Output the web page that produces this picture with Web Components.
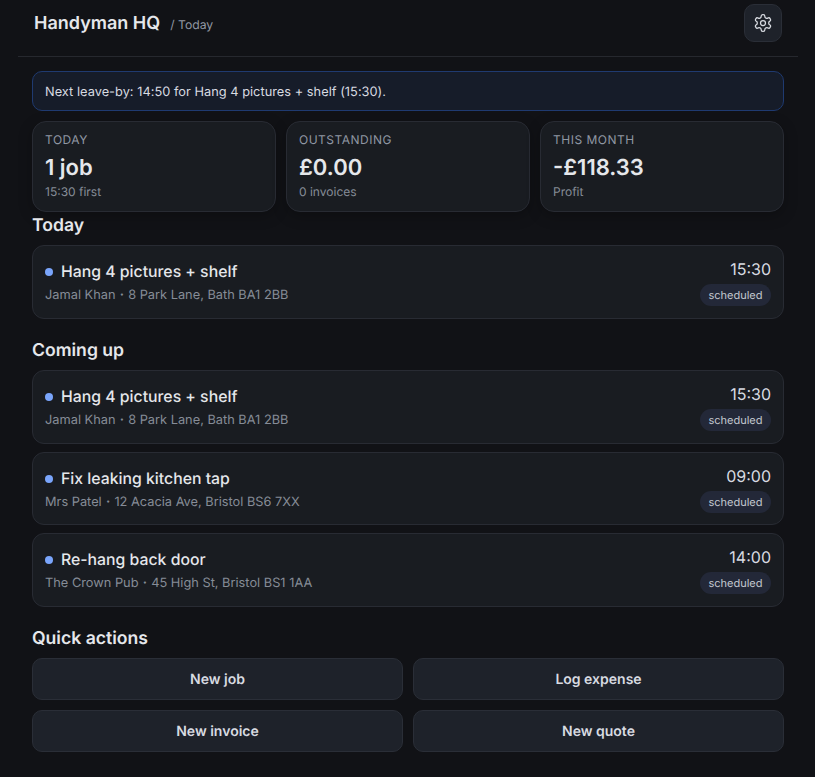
<!doctype html>
<html lang="en">
<head>
<meta charset="utf-8">
<title>Handyman HQ</title>
<style>
  html, body { margin: 0; background: #111216; }
  body { font-family: Inter, "Liberation Sans", sans-serif; color: #e5e7eb; text-rendering: geometricPrecision; }
</style>
</head>
<body>
<app-shell>
  <top-bar slot="header" title-text="Handyman HQ" crumb="/ Today"></top-bar>
  <info-banner>Next leave-by: 14:50 for Hang 4 pictures + shelf (15:30).</info-banner>
  <div class="stats" style="display:grid;grid-template-columns:repeat(3,1fr);gap:10px;">
    <stat-card label="TODAY" value="1 job" note="15:30 first"></stat-card>
    <stat-card label="OUTSTANDING" value="£0.00" note="0 invoices"></stat-card>
    <stat-card label="THIS MONTH" value="-£118.33" note="Profit"></stat-card>
  </div>
  <section-title>Today</section-title>
  <job-card name="Hang 4 pictures + shelf" who="Jamal Khan" where="8 Park Lane, Bath BA1 2BB" time="15:30"></job-card>
  <section-title style="margin-top:18.5px">Coming up</section-title>
  <job-card name="Hang 4 pictures + shelf" who="Jamal Khan" where="8 Park Lane, Bath BA1 2BB" time="15:30"></job-card>
  <job-card style="margin-top:8px" name="Fix leaking kitchen tap" who="Mrs Patel" where="12 Acacia Ave, Bristol BS6 7XX" time="09:00"></job-card>
  <job-card style="margin-top:8px" name="Re-hang back door" who="The Crown Pub" where="45 High St, Bristol BS1 1AA" time="14:00"></job-card>
  <section-title style="margin-top:18.5px">Quick actions</section-title>
  <div style="display:grid;grid-template-columns:1fr 1fr;gap:10px;">
    <action-button>New job</action-button>
    <action-button>Log expense</action-button>
    <action-button>New invoice</action-button>
    <action-button>New quote</action-button>
  </div>
</app-shell>

<script>
class AppShell extends HTMLElement {
  constructor() {
    super();
    this.attachShadow({mode: 'open'}).innerHTML = `
      <style>
        :host { display: block; width: 780px; margin-left: 18px; box-sizing: border-box; }
        main { padding: 14px 14px 25px; display: flex; flex-direction: column; }
        ::slotted(info-banner) { margin-bottom: 10px; }
      </style>
      <slot name="header"></slot>
      <main><slot></slot></main>
    `;
  }
}

class TopBar extends HTMLElement {
  constructor() {
    super();
    const title = this.getAttribute('title-text') || '';
    const crumb = this.getAttribute('crumb') || '';
    this.attachShadow({mode: 'open'}).innerHTML = `
      <style>
        :host { display: flex; align-items: center; justify-content: space-between;
                height: 56px; padding: 0 16px 0 16px; border-bottom: 1px solid #26282e;
                box-sizing: content-box; }
        .left { display: flex; align-items: baseline; gap: 10px; margin-top: -9px; }
        h1 { margin: 0; font-size: 18px; font-weight: 600; color: #e5e7eb; line-height: 28px; }
        span { font-size: 12.2px; color: #9097a3; }
        button { width: 38px; height: 38px; margin-top: -10px; padding: 0; display: grid; place-items: center;
                 background: #1e222a; border: 1px solid #2a2e37; border-radius: 10px; color: #d8dbe1; }
        svg { width: 20px; height: 20px; fill: none; stroke: currentColor; stroke-width: 1.5;
              stroke-linecap: round; stroke-linejoin: round; }
      </style>
      <div class="left"><h1>${title}</h1><span>${crumb}</span></div>
      <button aria-label="Settings">
        <svg viewBox="0 0 24 24">
          <path d="M12.22 2h-.44a2 2 0 0 0-2 2v.18a2 2 0 0 1-1 1.73l-.43.25a2 2 0 0 1-2 0l-.15-.08a2 2 0 0 0-2.73.73l-.22.38a2 2 0 0 0 .73 2.73l.15.1a2 2 0 0 1 1 1.72v.51a2 2 0 0 1-1 1.74l-.15.09a2 2 0 0 0-.73 2.73l.22.38a2 2 0 0 0 2.73.73l.15-.08a2 2 0 0 1 2 0l.43.25a2 2 0 0 1 1 1.73V20a2 2 0 0 0 2 2h.44a2 2 0 0 0 2-2v-.18a2 2 0 0 1 1-1.73l.43-.25a2 2 0 0 1 2 0l.15.08a2 2 0 0 0 2.73-.73l.22-.39a2 2 0 0 0-.73-2.73l-.15-.08a2 2 0 0 1-1-1.74v-.5a2 2 0 0 1 1-1.74l.15-.09a2 2 0 0 0 .73-2.73l-.22-.38a2 2 0 0 0-2.73-.73l-.15.08a2 2 0 0 1-2 0l-.43-.25a2 2 0 0 1-1-1.73V4a2 2 0 0 0-2-2z"></path>
          <circle cx="12" cy="12" r="3"></circle>
        </svg>
      </button>
    `;
  }
}

class InfoBanner extends HTMLElement {
  constructor() {
    super();
    this.attachShadow({mode: 'open'}).innerHTML = `
      <style>
        :host { display: block; height: 40px; box-sizing: border-box; padding: 0 12px; line-height: 41px;
                background: #161c29; border: 1px solid #1f3a70; border-radius: 10px;
                font-size: 12.8px; letter-spacing: .02px; color: #d8dbe1; }
      </style>
      <slot></slot>
    `;
  }
}

class StatCard extends HTMLElement {
  constructor() {
    super();
    this.attachShadow({mode: 'open'}).innerHTML = `
      <style>
        :host { display: block; height: 91px; box-sizing: border-box; padding: 10px 12px;
                background: #191c21; border: 1px solid #282b33; border-radius: 14px;
                box-shadow: 0 4px 14px rgba(0,0,0,.25); }
        .label { font-size: 12px; line-height: 15px; letter-spacing: .5px; color: #9097a3; }
        .value { font-size: 22px; line-height: 28px; font-weight: 600; color: #e5e7eb; margin-top: 7px; }
        .note { font-size: 12px; line-height: 15px; color: #868c97; margin-top: 2px; }
      </style>
      <div class="label">${this.getAttribute('label')}</div>
      <div class="value">${this.getAttribute('value')}</div>
      <div class="note">${this.getAttribute('note')}</div>
    `;
  }
}

class SectionTitle extends HTMLElement {
  constructor() {
    super();
    this.attachShadow({mode: 'open'}).innerHTML = `
      <style>
        :host { display: block; font-size: 17.6px; line-height: 25px; padding-top: 1px; font-weight: 600; color: #e5e7eb; margin-bottom: 7px; }
      </style>
      <slot></slot>
    `;
  }
}

class JobCard extends HTMLElement {
  constructor() {
    super();
    const a = n => this.getAttribute(n);
    this.attachShadow({mode: 'open'}).innerHTML = `
      <style>
        :host { display: flex; justify-content: space-between; align-items: center; height: 73.5px;
                box-sizing: border-box; padding: 0 12px; background: #191c21;
                border: 1px solid #282b33; border-radius: 12px; }
        .name { display: flex; align-items: center; gap: 8px; font-size: 15.8px; line-height: 26px; font-weight: 500; color: #e5e7eb; }
        .dot { width: 8px; height: 8px; border-radius: 50%; background: #7aa5fb; }
        .sub { font-size: 12.8px; line-height: 16px; color: #868c97; margin-top: 3px; }
        .sep { font-weight: 700; padding: 0 .6px; }
        .right { display: flex; flex-direction: column; align-items: flex-end; }
        .time { font-size: 16px; line-height: 25px; color: #d8dbe1; }
        .pill { margin-top: 2px; font-size: 11px; line-height: 22px; padding: 0 8.5px; border-radius: 999px;
                background: #232838; color: #c4c8d1; }
      </style>
      <div>
        <div class="name"><span class="dot"></span><span>${a('name')}</span></div>
        <div class="sub">${a('who')} <span class="sep">·</span> ${a('where')}</div>
      </div>
      <div class="right">
        <div class="time">${a('time')}</div>
        <div class="pill">scheduled</div>
      </div>
    `;
  }
}

class ActionButton extends HTMLElement {
  constructor() {
    super();
    this.attachShadow({mode: 'open'}).innerHTML = `
      <style>
        :host { display: block; }
        button { display: block; width: 100%; height: 42px; padding: 0; font: 600 14px Inter, "Liberation Sans", sans-serif;
                 color: #d8dbe1; background: #1e222a; border: 1px solid #2a2e37; border-radius: 10px; text-rendering: geometricPrecision; }
      </style>
      <button><slot></slot></button>
    `;
  }
}

customElements.define('app-shell', AppShell);
customElements.define('top-bar', TopBar);
customElements.define('info-banner', InfoBanner);
customElements.define('stat-card', StatCard);
customElements.define('section-title', SectionTitle);
customElements.define('job-card', JobCard);
customElements.define('action-button', ActionButton);
</script>
</body>
</html>
